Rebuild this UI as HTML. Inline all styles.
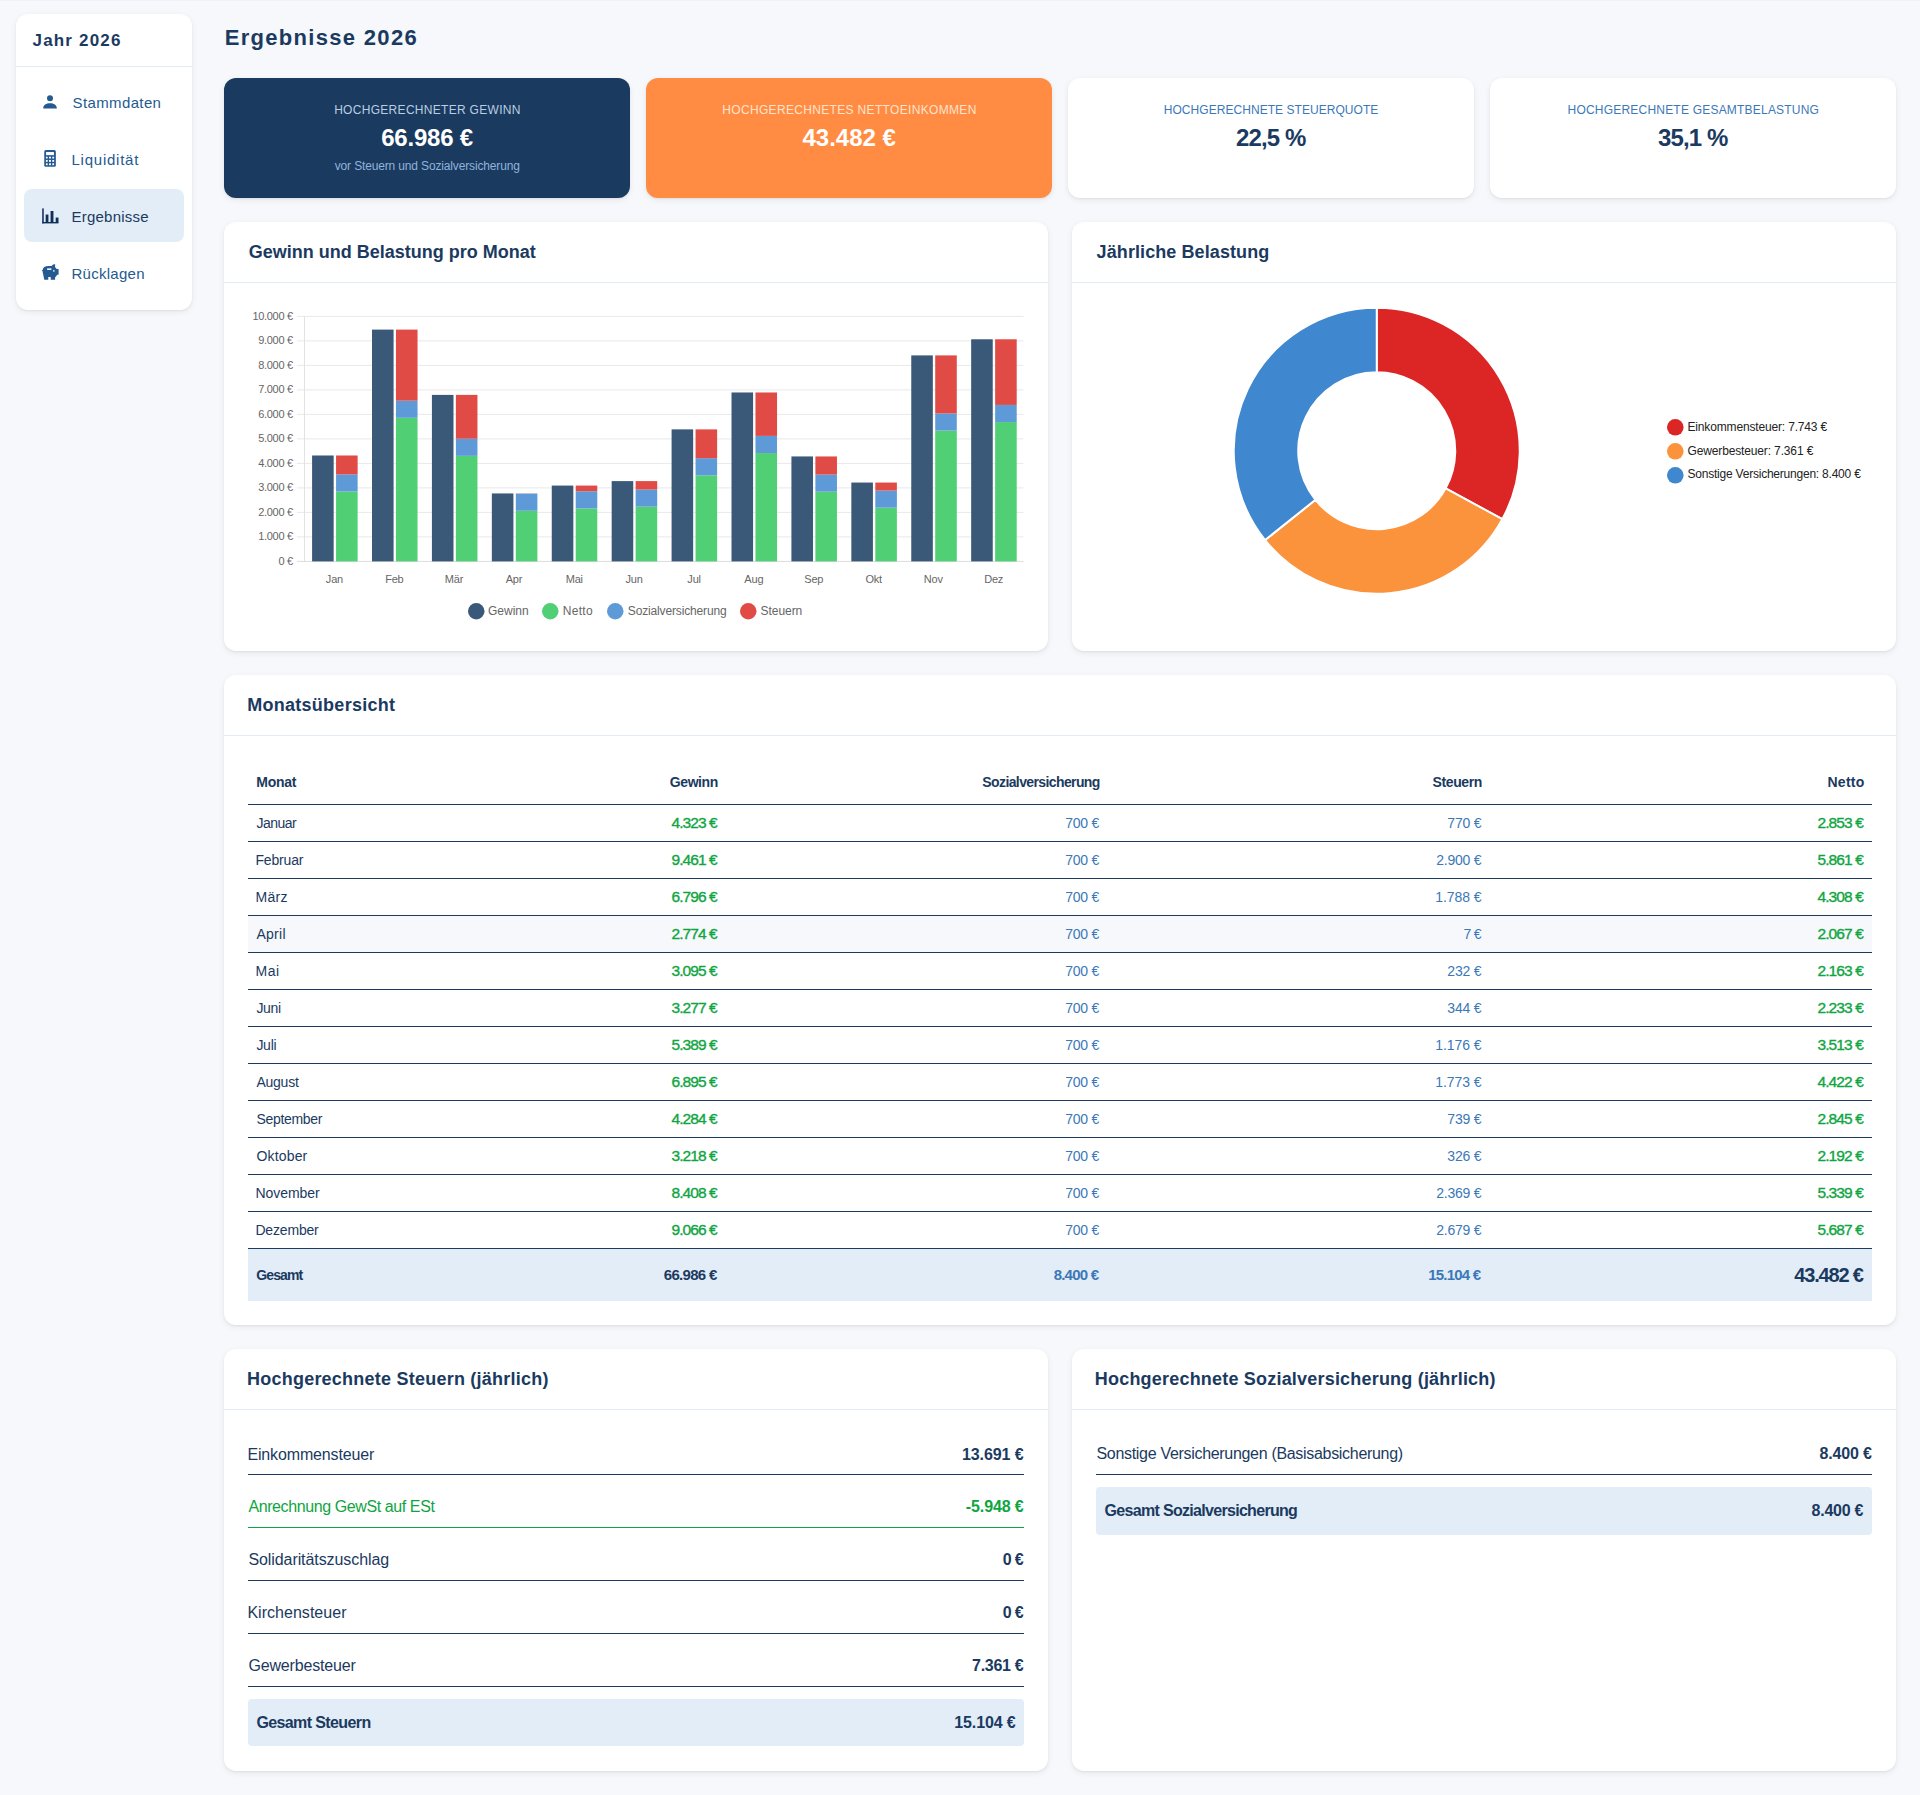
<!DOCTYPE html><html lang="de"><head><meta charset="utf-8"><title>Ergebnisse 2026</title><style>
*{box-sizing:border-box;margin:0;padding:0}
html,body{width:1920px;height:1795px;overflow:hidden}
body{background:#f6f8fc;font-family:"Liberation Sans",sans-serif;color:#1e3a5f;position:relative}
.t{position:absolute;white-space:nowrap}
.b{position:absolute}
.card{position:absolute;background:#fff;border-radius:12px;box-shadow:0 2px 6px rgba(0,0,0,.07),0 1px 2px rgba(0,0,0,.05)}
svg{position:absolute;overflow:visible}
</style></head><body>
<div class="b" style="left:0px;top:0px;width:1920px;height:1px;background:#f0f2f6;"></div>
<div class="card" style="left:16px;top:14px;width:176px;height:296px"></div>
<div class="t" style="top:31.61px;font-size:17px;line-height:17px;color:#1b3a5f;font-weight:bold;letter-spacing:1.19px;left:32.50px;">Jahr 2026</div>
<div class="b" style="left:16px;top:66px;width:176px;height:1px;background:#e2eaf3;"></div>
<div class="b" style="left:24px;top:189px;width:160px;height:53px;background:#e3edf7;border-radius:8px"></div>
<svg style="left:43px;top:95px" width="14" height="14" viewBox="0 0 14 14"><circle cx="7" cy="3.2" r="3" fill="#245a90"/><path d="M0.2 13.6 C0.2 9.6 3.2 8.2 7 8.2 C10.8 8.2 13.8 9.6 13.8 13.6 Z" fill="#245a90"/></svg>
<svg style="left:44px;top:150px" width="12" height="17" viewBox="0 0 12 17"><rect x="0.25" y="0.05" width="11.6" height="16.7" rx="1.6" fill="#245a90"/><g fill="#fff"><rect x="2.05" y="2.05" width="7.9" height="3.1"/><rect x="1.95" y="6.7" width="1.7" height="1.8"/><rect x="5.05" y="6.7" width="1.9" height="1.8"/><rect x="8.3" y="6.7" width="1.8" height="1.8"/><rect x="1.95" y="9.95" width="1.7" height="1.9"/><rect x="5.05" y="9.95" width="1.9" height="1.9"/><rect x="8.3" y="9.95" width="1.8" height="1.9"/><rect x="1.95" y="13.3" width="1.7" height="1.9"/><rect x="5.05" y="13.3" width="1.9" height="1.9"/><rect x="8.3" y="13.3" width="1.8" height="1.9"/></g></svg>
<svg style="left:41.5px;top:207.5px" width="17" height="16" viewBox="0 0 17 16"><g fill="#10305a"><rect x="0.2" y="0.4" width="1.56" height="15"/><rect x="0.2" y="14.0" width="16.27" height="1.4"/><rect x="3.65" y="6.55" width="2.79" height="8"/><rect x="8.56" y="3.0" width="2.89" height="11.5"/><rect x="13.68" y="9.56" width="2.79" height="5"/></g></svg>
<svg style="left:41.5px;top:264px" width="17" height="16" viewBox="0 0 17 16"><path fill="#245a90" d="M0.6 6.0 C0.9 3.3 3.0 1.9 6.5 1.9 L9.6 1.9 C10.4 0.8 11.5 0.15 12.6 0.15 C13.1 0.15 13.3 0.5 13.2 1.0 L12.9 3.0 C13.6 3.6 14.3 4.3 14.7 5.0 L16.6 5.0 L16.6 10.7 L15.1 10.7 C14.6 11.8 13.9 12.6 13.1 13.2 L13.1 15.7 L8.7 15.7 L8.7 13.1 L6.3 13.1 L6.3 15.7 L2.3 15.7 L1.3 11.0 C0.8 9.5 0.6 8.0 0.6 6.6 Z"/><circle cx="0.35" cy="6.6" r="0.55" fill="#245a90"/><rect x="5.1" y="4.4" width="4.3" height="1.5" fill="#fff"/><circle cx="11.85" cy="6.9" r="0.8" fill="#fff"/></svg>
<div class="t" style="top:95.30px;font-size:15px;line-height:15px;color:#245a90;letter-spacing:0.38px;left:72.50px;">Stammdaten</div>
<div class="t" style="top:152.30px;font-size:15px;line-height:15px;color:#245a90;letter-spacing:0.76px;left:71.50px;">Liquidität</div>
<div class="t" style="top:209.30px;font-size:15px;line-height:15px;color:#1b3a5f;letter-spacing:0.23px;left:71.50px;">Ergebnisse</div>
<div class="t" style="top:266.30px;font-size:15px;line-height:15px;color:#245a90;letter-spacing:0.27px;left:71.50px;">Rücklagen</div>
<div class="t" style="top:27.38px;font-size:22px;line-height:22px;color:#1b3a5f;font-weight:bold;letter-spacing:1.31px;left:224.70px;">Ergebnisse 2026</div>
<div class="card" style="left:224px;top:78px;width:406px;height:120px;background:#1b3a5f"></div>
<div class="t" style="top:103.84px;font-size:12px;line-height:12px;color:#b9cde2;letter-spacing:0.30px;left:334.15px;">HOCHGERECHNETER GEWINN</div>
<div class="t" style="top:126.28px;font-size:24px;line-height:24px;color:#ffffff;font-weight:bold;letter-spacing:-0.20px;left:381.15px;">66.986 €</div>
<div class="t" style="top:159.84px;font-size:12px;line-height:12px;color:#8fb3dc;letter-spacing:-0.15px;left:334.75px;">vor Steuern und Sozialversicherung</div>
<div class="card" style="left:646px;top:78px;width:406px;height:120px;background:#ff8c42"></div>
<div class="t" style="top:103.84px;font-size:12px;line-height:12px;color:#ffe3cf;letter-spacing:0.33px;left:722.30px;">HOCHGERECHNETES NETTOEINKOMMEN</div>
<div class="t" style="top:126.28px;font-size:24px;line-height:24px;color:#ffffff;font-weight:bold;letter-spacing:-0.01px;left:802.50px;">43.482 €</div>
<div class="card" style="left:1068px;top:78px;width:406px;height:120px;background:#ffffff"></div>
<div class="t" style="top:103.84px;font-size:12px;line-height:12px;color:#3b78b8;letter-spacing:0.05px;left:1163.75px;">HOCHGERECHNETE STEUERQUOTE</div>
<div class="t" style="top:126.28px;font-size:24px;line-height:24px;color:#1b3a5f;font-weight:bold;letter-spacing:-0.88px;left:1236.00px;">22,5 %</div>
<div class="card" style="left:1490px;top:78px;width:406px;height:120px;background:#ffffff"></div>
<div class="t" style="top:103.84px;font-size:12px;line-height:12px;color:#3b78b8;letter-spacing:0.21px;left:1567.50px;">HOCHGERECHNETE GESAMTBELASTUNG</div>
<div class="t" style="top:126.28px;font-size:24px;line-height:24px;color:#1b3a5f;font-weight:bold;letter-spacing:-0.88px;left:1658.00px;">35,1 %</div>
<div class="card" style="left:224px;top:222px;width:824px;height:429px"></div>
<div class="t" style="top:242.76px;font-size:18px;line-height:18px;color:#1b3a5f;font-weight:bold;left:248.70px;">Gewinn und Belastung pro Monat</div>
<div class="b" style="left:224px;top:282px;width:824px;height:1px;background:#e2eaf3;"></div>
<div class="card" style="left:1072px;top:222px;width:824px;height:429px"></div>
<div class="t" style="top:242.76px;font-size:18px;line-height:18px;color:#1b3a5f;font-weight:bold;letter-spacing:0.09px;left:1096.60px;">Jährliche Belastung</div>
<div class="b" style="left:1072px;top:282px;width:824px;height:1px;background:#e2eaf3;"></div>
<svg style="left:0;top:0" width="1920" height="700" viewBox="0 0 1920 700"><line x1="297" y1="536.9" x2="1023.5" y2="536.9" stroke="#e9e9e9" stroke-width="1"/><line x1="297" y1="512.4" x2="1023.5" y2="512.4" stroke="#e9e9e9" stroke-width="1"/><line x1="297" y1="487.9" x2="1023.5" y2="487.9" stroke="#e9e9e9" stroke-width="1"/><line x1="297" y1="463.4" x2="1023.5" y2="463.4" stroke="#e9e9e9" stroke-width="1"/><line x1="297" y1="438.9" x2="1023.5" y2="438.9" stroke="#e9e9e9" stroke-width="1"/><line x1="297" y1="414.4" x2="1023.5" y2="414.4" stroke="#e9e9e9" stroke-width="1"/><line x1="297" y1="389.9" x2="1023.5" y2="389.9" stroke="#e9e9e9" stroke-width="1"/><line x1="297" y1="365.4" x2="1023.5" y2="365.4" stroke="#e9e9e9" stroke-width="1"/><line x1="297" y1="340.9" x2="1023.5" y2="340.9" stroke="#e9e9e9" stroke-width="1"/><line x1="297" y1="316.4" x2="1023.5" y2="316.4" stroke="#e9e9e9" stroke-width="1"/><line x1="304.5" y1="316.4" x2="304.5" y2="561.4" stroke="#e2e2e2" stroke-width="1"/><line x1="297" y1="561.4" x2="1023.5" y2="561.4" stroke="#dcdcdc" stroke-width="1"/><rect x="312.09" y="455.49" width="21.57" height="105.91" fill="#3a5878"/><rect x="336.06" y="491.50" width="21.57" height="69.90" fill="#50cf75"/><rect x="336.06" y="474.35" width="21.57" height="17.15" fill="#5e9ad8"/><rect x="336.06" y="455.49" width="21.57" height="18.87" fill="#e04b45"/><rect x="372.01" y="329.61" width="21.57" height="231.79" fill="#3a5878"/><rect x="395.97" y="417.81" width="21.57" height="143.59" fill="#50cf75"/><rect x="395.97" y="400.66" width="21.57" height="17.15" fill="#5e9ad8"/><rect x="395.97" y="329.61" width="21.57" height="71.05" fill="#e04b45"/><rect x="431.92" y="394.90" width="21.57" height="166.50" fill="#3a5878"/><rect x="455.89" y="455.85" width="21.57" height="105.55" fill="#50cf75"/><rect x="455.89" y="438.70" width="21.57" height="17.15" fill="#5e9ad8"/><rect x="455.89" y="394.90" width="21.57" height="43.81" fill="#e04b45"/><rect x="491.84" y="493.44" width="21.57" height="67.96" fill="#3a5878"/><rect x="515.81" y="510.76" width="21.57" height="50.64" fill="#50cf75"/><rect x="515.81" y="493.61" width="21.57" height="17.15" fill="#5e9ad8"/><rect x="515.81" y="493.44" width="21.57" height="0.17" fill="#e04b45"/><rect x="551.76" y="485.57" width="21.57" height="75.83" fill="#3a5878"/><rect x="575.72" y="508.41" width="21.57" height="52.99" fill="#50cf75"/><rect x="575.72" y="491.26" width="21.57" height="17.15" fill="#5e9ad8"/><rect x="575.72" y="485.57" width="21.57" height="5.68" fill="#e04b45"/><rect x="611.67" y="481.11" width="21.57" height="80.29" fill="#3a5878"/><rect x="635.64" y="506.69" width="21.57" height="54.71" fill="#50cf75"/><rect x="635.64" y="489.54" width="21.57" height="17.15" fill="#5e9ad8"/><rect x="635.64" y="481.11" width="21.57" height="8.43" fill="#e04b45"/><rect x="671.59" y="429.37" width="21.57" height="132.03" fill="#3a5878"/><rect x="695.56" y="475.33" width="21.57" height="86.07" fill="#50cf75"/><rect x="695.56" y="458.18" width="21.57" height="17.15" fill="#5e9ad8"/><rect x="695.56" y="429.37" width="21.57" height="28.81" fill="#e04b45"/><rect x="731.51" y="392.47" width="21.57" height="168.93" fill="#3a5878"/><rect x="755.47" y="453.06" width="21.57" height="108.34" fill="#50cf75"/><rect x="755.47" y="435.91" width="21.57" height="17.15" fill="#5e9ad8"/><rect x="755.47" y="392.47" width="21.57" height="43.44" fill="#e04b45"/><rect x="791.42" y="456.44" width="21.57" height="104.96" fill="#3a5878"/><rect x="815.39" y="491.70" width="21.57" height="69.70" fill="#50cf75"/><rect x="815.39" y="474.55" width="21.57" height="17.15" fill="#5e9ad8"/><rect x="815.39" y="456.44" width="21.57" height="18.11" fill="#e04b45"/><rect x="851.34" y="482.56" width="21.57" height="78.84" fill="#3a5878"/><rect x="875.31" y="507.70" width="21.57" height="53.70" fill="#50cf75"/><rect x="875.31" y="490.55" width="21.57" height="17.15" fill="#5e9ad8"/><rect x="875.31" y="482.56" width="21.57" height="7.99" fill="#e04b45"/><rect x="911.26" y="355.40" width="21.57" height="206.00" fill="#3a5878"/><rect x="935.22" y="430.59" width="21.57" height="130.81" fill="#50cf75"/><rect x="935.22" y="413.44" width="21.57" height="17.15" fill="#5e9ad8"/><rect x="935.22" y="355.40" width="21.57" height="58.04" fill="#e04b45"/><rect x="971.17" y="339.28" width="21.57" height="222.12" fill="#3a5878"/><rect x="995.14" y="422.07" width="21.57" height="139.33" fill="#50cf75"/><rect x="995.14" y="404.92" width="21.57" height="17.15" fill="#5e9ad8"/><rect x="995.14" y="339.28" width="21.57" height="65.64" fill="#e04b45"/></svg>
<div class="t" style="top:555.99px;font-size:11px;line-height:11px;color:#666666;letter-spacing:-0.30px;right:1627.18px;">0 €</div>
<div class="t" style="top:531.49px;font-size:11px;line-height:11px;color:#666666;letter-spacing:-0.30px;right:1627.18px;">1.000 €</div>
<div class="t" style="top:506.99px;font-size:11px;line-height:11px;color:#666666;letter-spacing:-0.30px;right:1627.18px;">2.000 €</div>
<div class="t" style="top:482.49px;font-size:11px;line-height:11px;color:#666666;letter-spacing:-0.30px;right:1627.18px;">3.000 €</div>
<div class="t" style="top:457.99px;font-size:11px;line-height:11px;color:#666666;letter-spacing:-0.30px;right:1627.18px;">4.000 €</div>
<div class="t" style="top:433.49px;font-size:11px;line-height:11px;color:#666666;letter-spacing:-0.30px;right:1627.18px;">5.000 €</div>
<div class="t" style="top:408.99px;font-size:11px;line-height:11px;color:#666666;letter-spacing:-0.30px;right:1627.18px;">6.000 €</div>
<div class="t" style="top:384.49px;font-size:11px;line-height:11px;color:#666666;letter-spacing:-0.30px;right:1627.18px;">7.000 €</div>
<div class="t" style="top:359.99px;font-size:11px;line-height:11px;color:#666666;letter-spacing:-0.30px;right:1627.18px;">8.000 €</div>
<div class="t" style="top:335.49px;font-size:11px;line-height:11px;color:#666666;letter-spacing:-0.30px;right:1627.18px;">9.000 €</div>
<div class="t" style="top:310.99px;font-size:11px;line-height:11px;color:#666666;letter-spacing:-0.30px;right:1627.18px;">10.000 €</div>
<div class="t" style="top:573.69px;font-size:11px;line-height:11px;color:#666666;letter-spacing:-0.20px;left:325.85px;">Jan</div>
<div class="t" style="top:573.69px;font-size:11px;line-height:11px;color:#666666;letter-spacing:-0.20px;left:385.16px;">Feb</div>
<div class="t" style="top:573.69px;font-size:11px;line-height:11px;color:#666666;letter-spacing:-0.20px;left:444.85px;">Mär</div>
<div class="t" style="top:573.69px;font-size:11px;line-height:11px;color:#666666;letter-spacing:-0.20px;left:505.68px;">Apr</div>
<div class="t" style="top:573.69px;font-size:11px;line-height:11px;color:#666666;letter-spacing:-0.20px;left:565.68px;">Mai</div>
<div class="t" style="top:573.69px;font-size:11px;line-height:11px;color:#666666;letter-spacing:-0.20px;left:625.43px;">Jun</div>
<div class="t" style="top:573.69px;font-size:11px;line-height:11px;color:#666666;letter-spacing:-0.20px;left:687.35px;">Jul</div>
<div class="t" style="top:573.69px;font-size:11px;line-height:11px;color:#666666;letter-spacing:-0.20px;left:744.35px;">Aug</div>
<div class="t" style="top:573.69px;font-size:11px;line-height:11px;color:#666666;letter-spacing:-0.20px;left:804.26px;">Sep</div>
<div class="t" style="top:573.69px;font-size:11px;line-height:11px;color:#666666;letter-spacing:-0.20px;left:865.38px;">Okt</div>
<div class="t" style="top:573.69px;font-size:11px;line-height:11px;color:#666666;letter-spacing:-0.20px;left:923.79px;">Nov</div>
<div class="t" style="top:573.69px;font-size:11px;line-height:11px;color:#666666;letter-spacing:-0.20px;left:984.21px;">Dez</div>
<svg style="left:467.50px;top:602.75px" width="16.5" height="16.5" viewBox="0 0 16.5 16.5"><circle cx="8.25" cy="8.25" r="8.25" fill="#3a5878"/></svg>
<div class="t" style="top:604.54px;font-size:12px;line-height:12px;color:#666666;left:488.00px;">Gewinn</div>
<svg style="left:542.15px;top:602.75px" width="16.5" height="16.5" viewBox="0 0 16.5 16.5"><circle cx="8.25" cy="8.25" r="8.25" fill="#50cf75"/></svg>
<div class="t" style="top:604.54px;font-size:12px;line-height:12px;color:#666666;letter-spacing:0.30px;left:562.80px;">Netto</div>
<svg style="left:607.05px;top:602.75px" width="16.5" height="16.5" viewBox="0 0 16.5 16.5"><circle cx="8.25" cy="8.25" r="8.25" fill="#5e9ad8"/></svg>
<div class="t" style="top:604.54px;font-size:12px;line-height:12px;color:#666666;letter-spacing:-0.15px;left:627.80px;">Sozialversicherung</div>
<svg style="left:740.15px;top:602.75px" width="16.5" height="16.5" viewBox="0 0 16.5 16.5"><circle cx="8.25" cy="8.25" r="8.25" fill="#e04b45"/></svg>
<div class="t" style="top:604.54px;font-size:12px;line-height:12px;color:#666666;letter-spacing:-0.06px;left:760.60px;">Steuern</div>
<svg style="left:0;top:0" width="1920" height="700" viewBox="0 0 1920 700"><path d="M1376.75 307.75 A143 143 0 0 1 1502.31 519.19 L1445.67 488.32 A78.5 78.5 0 0 0 1376.75 372.25 Z" fill="#dc2626" stroke="#fff" stroke-width="2" stroke-linejoin="bevel"/><path d="M1502.31 519.19 A143 143 0 0 1 1265.08 540.08 L1315.45 499.79 A78.5 78.5 0 0 0 1445.67 488.32 Z" fill="#fb923c" stroke="#fff" stroke-width="2" stroke-linejoin="bevel"/><path d="M1265.08 540.08 A143 143 0 0 1 1376.75 307.75 L1376.75 372.25 A78.5 78.5 0 0 0 1315.45 499.79 Z" fill="#3f87cf" stroke="#fff" stroke-width="2" stroke-linejoin="bevel"/></svg>
<svg style="left:1666.80px;top:418.65px" width="16.6" height="16.6" viewBox="0 0 16.6 16.6"><circle cx="8.3" cy="8.3" r="8.3" fill="#dc2626"/></svg>
<div class="t" style="top:420.54px;font-size:12px;line-height:12px;color:#222222;letter-spacing:-0.16px;left:1687.50px;">Einkommensteuer: 7.743 €</div>
<svg style="left:1666.80px;top:442.70px" width="16.6" height="16.6" viewBox="0 0 16.6 16.6"><circle cx="8.3" cy="8.3" r="8.3" fill="#fb923c"/></svg>
<div class="t" style="top:444.59px;font-size:12px;line-height:12px;color:#222222;letter-spacing:-0.14px;left:1687.50px;">Gewerbesteuer: 7.361 €</div>
<svg style="left:1666.80px;top:466.60px" width="16.6" height="16.6" viewBox="0 0 16.6 16.6"><circle cx="8.3" cy="8.3" r="8.3" fill="#3f87cf"/></svg>
<div class="t" style="top:468.49px;font-size:12px;line-height:12px;color:#222222;letter-spacing:-0.22px;left:1687.50px;">Sonstige Versicherungen: 8.400 €</div>
<div class="card" style="left:224px;top:675px;width:1672px;height:650px"></div>
<div class="t" style="top:696.46px;font-size:18px;line-height:18px;color:#1b3a5f;font-weight:bold;letter-spacing:0.26px;left:247.30px;">Monatsübersicht</div>
<div class="b" style="left:224px;top:735px;width:1672px;height:1px;background:#e2eaf3;"></div>
<div class="t" style="top:774.95px;font-size:14px;line-height:14px;color:#1b3a5f;font-weight:bold;letter-spacing:-0.29px;left:256.30px;">Monat</div>
<div class="t" style="top:774.95px;font-size:14px;line-height:14px;color:#1b3a5f;font-weight:bold;letter-spacing:-0.42px;right:1202.17px;">Gewinn</div>
<div class="t" style="top:774.95px;font-size:14px;line-height:14px;color:#1b3a5f;font-weight:bold;letter-spacing:-0.61px;right:820.26px;">Sozialversicherung</div>
<div class="t" style="top:774.95px;font-size:14px;line-height:14px;color:#1b3a5f;font-weight:bold;letter-spacing:-0.39px;right:438.09px;">Steuern</div>
<div class="t" style="top:774.95px;font-size:14px;line-height:14px;color:#1b3a5f;font-weight:bold;letter-spacing:0.26px;right:55.44px;">Netto</div>
<div class="b" style="left:248px;top:804px;width:1624px;height:1px;background:#1e3a5f;"></div>
<div class="b" style="left:248px;top:841px;width:1624px;height:1px;background:#1e3a5f;"></div>
<div class="t" style="top:816.05px;font-size:14px;line-height:14px;color:#1b3a5f;letter-spacing:-0.49px;left:256.40px;">Januar</div>
<div class="t" style="top:815.18px;font-size:15.5px;line-height:15.5px;color:#0ea541;-webkit-text-stroke:0.35px #0ea541;letter-spacing:-0.93px;right:1203.31px;">4.323 €</div>
<div class="t" style="top:816.05px;font-size:14px;line-height:14px;color:#3b78b8;letter-spacing:-0.21px;right:820.83px;">700 €</div>
<div class="t" style="top:816.05px;font-size:14px;line-height:14px;color:#3b78b8;letter-spacing:-0.21px;right:438.68px;">770 €</div>
<div class="t" style="top:815.18px;font-size:15.5px;line-height:15.5px;color:#0ea541;-webkit-text-stroke:0.35px #0ea541;letter-spacing:-0.89px;right:57.07px;">2.853 €</div>
<div class="b" style="left:248px;top:878px;width:1624px;height:1px;background:#1e3a5f;"></div>
<div class="t" style="top:853.05px;font-size:14px;line-height:14px;color:#1b3a5f;letter-spacing:-0.16px;left:255.40px;">Februar</div>
<div class="t" style="top:852.18px;font-size:15.5px;line-height:15.5px;color:#0ea541;-webkit-text-stroke:0.35px #0ea541;letter-spacing:-0.93px;right:1203.31px;">9.461 €</div>
<div class="t" style="top:853.05px;font-size:14px;line-height:14px;color:#3b78b8;letter-spacing:-0.21px;right:820.83px;">700 €</div>
<div class="t" style="top:853.05px;font-size:14px;line-height:14px;color:#3b78b8;letter-spacing:-0.24px;right:438.70px;">2.900 €</div>
<div class="t" style="top:852.18px;font-size:15.5px;line-height:15.5px;color:#0ea541;-webkit-text-stroke:0.35px #0ea541;letter-spacing:-0.89px;right:57.07px;">5.861 €</div>
<div class="b" style="left:248px;top:915px;width:1624px;height:1px;background:#1e3a5f;"></div>
<div class="t" style="top:890.05px;font-size:14px;line-height:14px;color:#1b3a5f;letter-spacing:0.36px;left:255.40px;">März</div>
<div class="t" style="top:889.18px;font-size:15.5px;line-height:15.5px;color:#0ea541;-webkit-text-stroke:0.35px #0ea541;letter-spacing:-0.93px;right:1203.31px;">6.796 €</div>
<div class="t" style="top:890.05px;font-size:14px;line-height:14px;color:#3b78b8;letter-spacing:-0.21px;right:820.83px;">700 €</div>
<div class="t" style="top:890.05px;font-size:14px;line-height:14px;color:#3b78b8;letter-spacing:-0.07px;right:438.53px;">1.788 €</div>
<div class="t" style="top:889.18px;font-size:15.5px;line-height:15.5px;color:#0ea541;-webkit-text-stroke:0.35px #0ea541;letter-spacing:-0.89px;right:57.07px;">4.308 €</div>
<div class="b" style="left:248px;top:916px;width:1624px;height:36px;background:#f6f8fb;"></div>
<div class="b" style="left:248px;top:952px;width:1624px;height:1px;background:#1e3a5f;"></div>
<div class="t" style="top:927.05px;font-size:14px;line-height:14px;color:#1b3a5f;letter-spacing:0.30px;left:256.40px;">April</div>
<div class="t" style="top:926.18px;font-size:15.5px;line-height:15.5px;color:#0ea541;-webkit-text-stroke:0.35px #0ea541;letter-spacing:-0.93px;right:1203.31px;">2.774 €</div>
<div class="t" style="top:927.05px;font-size:14px;line-height:14px;color:#3b78b8;letter-spacing:-0.21px;right:820.83px;">700 €</div>
<div class="t" style="top:927.05px;font-size:14px;line-height:14px;color:#3b78b8;letter-spacing:-0.74px;right:439.20px;">7 €</div>
<div class="t" style="top:926.18px;font-size:15.5px;line-height:15.5px;color:#0ea541;-webkit-text-stroke:0.35px #0ea541;letter-spacing:-0.89px;right:57.07px;">2.067 €</div>
<div class="b" style="left:248px;top:989px;width:1624px;height:1px;background:#1e3a5f;"></div>
<div class="t" style="top:964.05px;font-size:14px;line-height:14px;color:#1b3a5f;letter-spacing:0.63px;left:255.40px;">Mai</div>
<div class="t" style="top:963.18px;font-size:15.5px;line-height:15.5px;color:#0ea541;-webkit-text-stroke:0.35px #0ea541;letter-spacing:-0.93px;right:1203.31px;">3.095 €</div>
<div class="t" style="top:964.05px;font-size:14px;line-height:14px;color:#3b78b8;letter-spacing:-0.21px;right:820.83px;">700 €</div>
<div class="t" style="top:964.05px;font-size:14px;line-height:14px;color:#3b78b8;letter-spacing:-0.21px;right:438.68px;">232 €</div>
<div class="t" style="top:963.18px;font-size:15.5px;line-height:15.5px;color:#0ea541;-webkit-text-stroke:0.35px #0ea541;letter-spacing:-0.89px;right:57.07px;">2.163 €</div>
<div class="b" style="left:248px;top:1026px;width:1624px;height:1px;background:#1e3a5f;"></div>
<div class="t" style="top:1001.05px;font-size:14px;line-height:14px;color:#1b3a5f;letter-spacing:-0.36px;left:256.40px;">Juni</div>
<div class="t" style="top:1000.18px;font-size:15.5px;line-height:15.5px;color:#0ea541;-webkit-text-stroke:0.35px #0ea541;letter-spacing:-0.93px;right:1203.31px;">3.277 €</div>
<div class="t" style="top:1001.05px;font-size:14px;line-height:14px;color:#3b78b8;letter-spacing:-0.21px;right:820.83px;">700 €</div>
<div class="t" style="top:1001.05px;font-size:14px;line-height:14px;color:#3b78b8;letter-spacing:-0.21px;right:438.68px;">344 €</div>
<div class="t" style="top:1000.18px;font-size:15.5px;line-height:15.5px;color:#0ea541;-webkit-text-stroke:0.35px #0ea541;letter-spacing:-0.89px;right:57.07px;">2.233 €</div>
<div class="b" style="left:248px;top:1063px;width:1624px;height:1px;background:#1e3a5f;"></div>
<div class="t" style="top:1038.05px;font-size:14px;line-height:14px;color:#1b3a5f;letter-spacing:-0.27px;left:256.40px;">Juli</div>
<div class="t" style="top:1037.18px;font-size:15.5px;line-height:15.5px;color:#0ea541;-webkit-text-stroke:0.35px #0ea541;letter-spacing:-0.93px;right:1203.31px;">5.389 €</div>
<div class="t" style="top:1038.05px;font-size:14px;line-height:14px;color:#3b78b8;letter-spacing:-0.21px;right:820.83px;">700 €</div>
<div class="t" style="top:1038.05px;font-size:14px;line-height:14px;color:#3b78b8;letter-spacing:-0.07px;right:438.53px;">1.176 €</div>
<div class="t" style="top:1037.18px;font-size:15.5px;line-height:15.5px;color:#0ea541;-webkit-text-stroke:0.35px #0ea541;letter-spacing:-0.89px;right:57.07px;">3.513 €</div>
<div class="b" style="left:248px;top:1100px;width:1624px;height:1px;background:#1e3a5f;"></div>
<div class="t" style="top:1075.05px;font-size:14px;line-height:14px;color:#1b3a5f;letter-spacing:-0.24px;left:256.40px;">August</div>
<div class="t" style="top:1074.18px;font-size:15.5px;line-height:15.5px;color:#0ea541;-webkit-text-stroke:0.35px #0ea541;letter-spacing:-0.93px;right:1203.31px;">6.895 €</div>
<div class="t" style="top:1075.05px;font-size:14px;line-height:14px;color:#3b78b8;letter-spacing:-0.21px;right:820.83px;">700 €</div>
<div class="t" style="top:1075.05px;font-size:14px;line-height:14px;color:#3b78b8;letter-spacing:-0.07px;right:438.53px;">1.773 €</div>
<div class="t" style="top:1074.18px;font-size:15.5px;line-height:15.5px;color:#0ea541;-webkit-text-stroke:0.35px #0ea541;letter-spacing:-0.89px;right:57.07px;">4.422 €</div>
<div class="b" style="left:248px;top:1137px;width:1624px;height:1px;background:#1e3a5f;"></div>
<div class="t" style="top:1112.05px;font-size:14px;line-height:14px;color:#1b3a5f;letter-spacing:-0.30px;left:256.40px;">September</div>
<div class="t" style="top:1111.18px;font-size:15.5px;line-height:15.5px;color:#0ea541;-webkit-text-stroke:0.35px #0ea541;letter-spacing:-0.93px;right:1203.31px;">4.284 €</div>
<div class="t" style="top:1112.05px;font-size:14px;line-height:14px;color:#3b78b8;letter-spacing:-0.21px;right:820.83px;">700 €</div>
<div class="t" style="top:1112.05px;font-size:14px;line-height:14px;color:#3b78b8;letter-spacing:-0.21px;right:438.68px;">739 €</div>
<div class="t" style="top:1111.18px;font-size:15.5px;line-height:15.5px;color:#0ea541;-webkit-text-stroke:0.35px #0ea541;letter-spacing:-0.89px;right:57.07px;">2.845 €</div>
<div class="b" style="left:248px;top:1174px;width:1624px;height:1px;background:#1e3a5f;"></div>
<div class="t" style="top:1149.05px;font-size:14px;line-height:14px;color:#1b3a5f;letter-spacing:0.18px;left:256.40px;">Oktober</div>
<div class="t" style="top:1148.18px;font-size:15.5px;line-height:15.5px;color:#0ea541;-webkit-text-stroke:0.35px #0ea541;letter-spacing:-0.93px;right:1203.31px;">3.218 €</div>
<div class="t" style="top:1149.05px;font-size:14px;line-height:14px;color:#3b78b8;letter-spacing:-0.21px;right:820.83px;">700 €</div>
<div class="t" style="top:1149.05px;font-size:14px;line-height:14px;color:#3b78b8;letter-spacing:-0.21px;right:438.68px;">326 €</div>
<div class="t" style="top:1148.18px;font-size:15.5px;line-height:15.5px;color:#0ea541;-webkit-text-stroke:0.35px #0ea541;letter-spacing:-0.89px;right:57.07px;">2.192 €</div>
<div class="b" style="left:248px;top:1211px;width:1624px;height:1px;background:#1e3a5f;"></div>
<div class="t" style="top:1186.05px;font-size:14px;line-height:14px;color:#1b3a5f;letter-spacing:-0.03px;left:255.40px;">November</div>
<div class="t" style="top:1185.18px;font-size:15.5px;line-height:15.5px;color:#0ea541;-webkit-text-stroke:0.35px #0ea541;letter-spacing:-0.93px;right:1203.31px;">8.408 €</div>
<div class="t" style="top:1186.05px;font-size:14px;line-height:14px;color:#3b78b8;letter-spacing:-0.21px;right:820.83px;">700 €</div>
<div class="t" style="top:1186.05px;font-size:14px;line-height:14px;color:#3b78b8;letter-spacing:-0.24px;right:438.70px;">2.369 €</div>
<div class="t" style="top:1185.18px;font-size:15.5px;line-height:15.5px;color:#0ea541;-webkit-text-stroke:0.35px #0ea541;letter-spacing:-0.89px;right:57.07px;">5.339 €</div>
<div class="b" style="left:248px;top:1248px;width:1624px;height:1px;background:#1e3a5f;"></div>
<div class="t" style="top:1223.05px;font-size:14px;line-height:14px;color:#1b3a5f;letter-spacing:-0.17px;left:255.40px;">Dezember</div>
<div class="t" style="top:1222.18px;font-size:15.5px;line-height:15.5px;color:#0ea541;-webkit-text-stroke:0.35px #0ea541;letter-spacing:-0.93px;right:1203.31px;">9.066 €</div>
<div class="t" style="top:1223.05px;font-size:14px;line-height:14px;color:#3b78b8;letter-spacing:-0.21px;right:820.83px;">700 €</div>
<div class="t" style="top:1223.05px;font-size:14px;line-height:14px;color:#3b78b8;letter-spacing:-0.24px;right:438.70px;">2.679 €</div>
<div class="t" style="top:1222.18px;font-size:15.5px;line-height:15.5px;color:#0ea541;-webkit-text-stroke:0.35px #0ea541;letter-spacing:-0.89px;right:57.07px;">5.687 €</div>
<div class="b" style="left:248px;top:1249px;width:1624px;height:52px;background:#e3edf7;"></div>
<div class="t" style="top:1268.15px;font-size:14px;line-height:14px;color:#1b3a5f;font-weight:bold;letter-spacing:-0.88px;left:256.30px;">Gesamt</div>
<div class="t" style="top:1267.30px;font-size:15px;line-height:15px;color:#1b3a5f;font-weight:bold;letter-spacing:-0.71px;right:1203.46px;">66.986 €</div>
<div class="t" style="top:1267.30px;font-size:15px;line-height:15px;color:#3b78b8;font-weight:bold;letter-spacing:-0.78px;right:821.74px;">8.400 €</div>
<div class="t" style="top:1267.30px;font-size:15px;line-height:15px;color:#3b78b8;font-weight:bold;letter-spacing:-0.79px;right:439.70px;">15.104 €</div>
<div class="t" style="top:1264.82px;font-size:20px;line-height:20px;color:#1b3a5f;font-weight:bold;letter-spacing:-1.18px;right:57.30px;">43.482 €</div>
<div class="card" style="left:224px;top:1349px;width:824px;height:422px"></div>
<div class="t" style="top:1370.46px;font-size:18px;line-height:18px;color:#1b3a5f;font-weight:bold;letter-spacing:0.23px;left:247.00px;">Hochgerechnete Steuern (jährlich)</div>
<div class="b" style="left:224px;top:1409px;width:824px;height:1px;background:#e2eaf3;"></div>
<div class="card" style="left:1072px;top:1349px;width:824px;height:422px"></div>
<div class="t" style="top:1370.46px;font-size:18px;line-height:18px;color:#1b3a5f;font-weight:bold;letter-spacing:0.20px;left:1094.80px;">Hochgerechnete Sozialversicherung (jährlich)</div>
<div class="b" style="left:1072px;top:1409px;width:824px;height:1px;background:#e2eaf3;"></div>
<div class="t" style="top:1446.56px;font-size:16px;line-height:16px;color:#1b3a5f;letter-spacing:-0.14px;left:247.40px;">Einkommensteuer</div>
<div class="t" style="top:1446.56px;font-size:16px;line-height:16px;color:#1b3a5f;font-weight:bold;letter-spacing:-0.07px;right:896.37px;">13.691 €</div>
<div class="b" style="left:248px;top:1474px;width:776px;height:1px;background:#1e3a5f;"></div>
<div class="t" style="top:1499.41px;font-size:16px;line-height:16px;color:#0ea541;letter-spacing:-0.40px;left:248.40px;">Anrechnung GewSt auf ESt</div>
<div class="t" style="top:1499.41px;font-size:16px;line-height:16px;color:#0ea541;font-weight:bold;letter-spacing:-0.12px;right:896.42px;">-5.948 €</div>
<div class="b" style="left:248px;top:1527px;width:776px;height:1px;background:#0ea541;"></div>
<div class="t" style="top:1552.26px;font-size:16px;line-height:16px;color:#1b3a5f;letter-spacing:-0.08px;left:248.40px;">Solidaritätszuschlag</div>
<div class="t" style="top:1552.26px;font-size:16px;line-height:16px;color:#1b3a5f;font-weight:bold;letter-spacing:-0.67px;right:896.97px;">0 €</div>
<div class="b" style="left:248px;top:1580px;width:776px;height:1px;background:#1e3a5f;"></div>
<div class="t" style="top:1605.11px;font-size:16px;line-height:16px;color:#1b3a5f;letter-spacing:0.03px;left:247.40px;">Kirchensteuer</div>
<div class="t" style="top:1605.11px;font-size:16px;line-height:16px;color:#1b3a5f;font-weight:bold;letter-spacing:-0.67px;right:896.97px;">0 €</div>
<div class="b" style="left:248px;top:1633px;width:776px;height:1px;background:#1e3a5f;"></div>
<div class="t" style="top:1657.96px;font-size:16px;line-height:16px;color:#1b3a5f;letter-spacing:-0.16px;left:248.40px;">Gewerbesteuer</div>
<div class="t" style="top:1657.96px;font-size:16px;line-height:16px;color:#1b3a5f;font-weight:bold;letter-spacing:-0.30px;right:896.60px;">7.361 €</div>
<div class="b" style="left:248px;top:1686px;width:776px;height:1px;background:#1e3a5f;"></div>
<div class="b" style="left:248px;top:1699px;width:776px;height:47.4px;background:#e3edf7;border-radius:4px"></div>
<div class="t" style="top:1715.06px;font-size:16px;line-height:16px;color:#1b3a5f;font-weight:bold;letter-spacing:-0.61px;left:256.40px;">Gesamt Steuern</div>
<div class="t" style="top:1715.06px;font-size:16px;line-height:16px;color:#1b3a5f;font-weight:bold;letter-spacing:-0.13px;right:904.48px;">15.104 €</div>
<div class="t" style="top:1446.36px;font-size:16px;line-height:16px;color:#1b3a5f;letter-spacing:-0.31px;left:1096.50px;">Sonstige Versicherungen (Basisabsicherung)</div>
<div class="t" style="top:1446.26px;font-size:16px;line-height:16px;color:#1b3a5f;font-weight:bold;letter-spacing:-0.18px;right:48.38px;">8.400 €</div>
<div class="b" style="left:1096px;top:1474px;width:776px;height:1px;background:#1e3a5f;"></div>
<div class="b" style="left:1096px;top:1487.2px;width:776px;height:47.4px;background:#e3edf7;border-radius:4px"></div>
<div class="t" style="top:1503.06px;font-size:16px;line-height:16px;color:#1b3a5f;font-weight:bold;letter-spacing:-0.69px;left:1104.60px;">Gesamt Sozialversicherung</div>
<div class="t" style="top:1502.96px;font-size:16px;line-height:16px;color:#1b3a5f;font-weight:bold;letter-spacing:-0.25px;right:56.75px;">8.400 €</div>
</body></html>
